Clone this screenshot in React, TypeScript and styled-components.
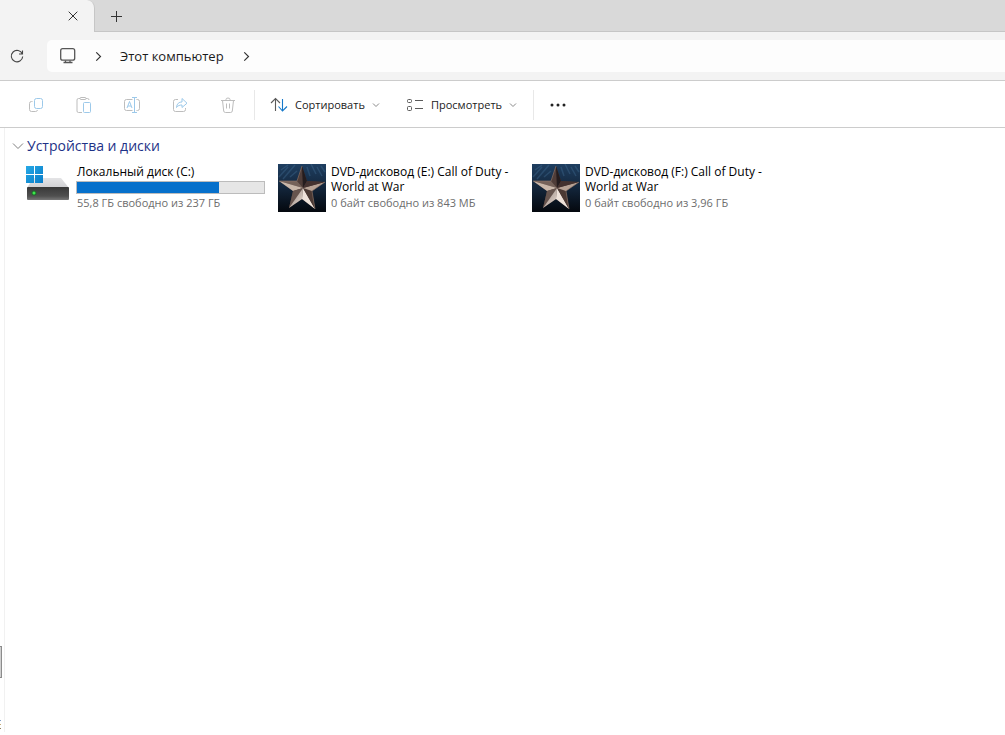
import React from "react";
import styled, { createGlobalStyle } from "styled-components";

const GlobalStyle = createGlobalStyle`
  *, *::before, *::after { box-sizing: border-box; }
  body {
    margin: 0;
    background: #ffffff;
    color: #1b1b1b;
    font-family: "Open Sans", "Noto Sans", sans-serif;
  }
  button { font: inherit; color: inherit; background: none; border: 0; padding: 0; }
  h2, h3, p, ul { margin: 0; padding: 0; }
  svg { flex: none; }
`;

const Explorer = styled.div`
  display: flex;
  flex-direction: column;
  min-height: 100vh;
`;

const TabStrip = styled.header`
  display: flex;
  height: 32px;
  background: #d9d9d9;
  box-shadow: inset 0 -1px #c6c6c6;
`;

const ActiveTab = styled.div`
  display: flex;
  align-items: center;
  justify-content: flex-end;
  width: 95px;
  padding-right: 11px;
  background: #f3f3f3;
  border-right: 1px solid #c6c6c6;
  border-top-right-radius: 8px;
`;

const StripButton = styled.button`
  display: flex;
  align-items: center;
  justify-content: center;
  width: 20px;
  height: 32px;
`;

const NewTabButton = styled(StripButton)`
  width: 42px;
`;

const AddressRow = styled.div`
  display: flex;
  align-items: center;
  height: 49px;
  background: #f3f3f3;
  border-bottom: 1px solid #cccccc;
`;

const RefreshButton = styled.button`
  display: flex;
  width: 47px;
  padding-left: 9px;
`;

const Breadcrumbs = styled.nav`
  display: flex;
  flex: 1;
  align-items: center;
  height: 32px;
  padding-left: 12px;
  background: #fdfdfd;
  border-radius: 5px 0 0 5px;
`;

const Crumb = styled.a`
  display: flex;
  color: #1b1b1b;
  font-size: 13px;
  line-height: 20px;
  text-decoration: none;
`;

const CrumbArrow = styled.span<{ $gap: number }>`
  display: flex;
  padding: 0 ${(p) => p.$gap}px;
`;

const Toolbar = styled.div`
  display: flex;
  align-items: center;
  height: 47px;
  border-bottom: 1px solid #cccccc;
  padding: 2px 0 0 12px;
`;

const ToolButton = styled.button`
  display: flex;
  align-items: center;
  justify-content: center;
  width: 48px;
  height: 40px;
`;

const Divider = styled.span<{ $before: number }>`
  width: 1px;
  height: 30px;
  margin-left: ${(p) => p.$before}px;
  background: #e8e8e8;
`;

const MenuButton = styled.button<{ $width: number }>`
  display: flex;
  align-items: center;
  gap: 7px;
  width: ${(p) => p.$width}px;
  height: 40px;
  font-size: 11px;
  line-height: 16px;
  white-space: nowrap;
`;

const MenuGroup = styled.div`
  display: flex;
  padding-left: 15px;
`;

const Body = styled.div`
  display: flex;
  flex: 1;
`;

const NavEdge = styled.aside`
  display: flex;
  flex-direction: column;
  justify-content: flex-end;
  width: 5px;
  margin-bottom: 3px;
  border-right: 1px solid #f1f1f1;
`;

const ScrollThumb = styled.div`
  width: 2px;
  height: 32px;
  margin-bottom: 42px;
  background: #d0d0d0;
  border: solid #8c8c8c;
  border-width: 1px 1px 1px 0;
`;

const StatusMark = styled.span<{ $color: string }>`
  width: 1px;
  height: 1px;
  margin-bottom: 3px;
  background: ${(p) => p.$color};
`;

const Content = styled.main`
  flex: 1;
  padding: 8px 8px 0 7px;
`;

const GroupHeader = styled.button`
  display: flex;
  align-items: center;
  gap: 3px;
  color: #1e3287;
`;

const GroupTitle = styled.h2`
  font-size: 14px;
  font-weight: 400;
  line-height: 20px;
`;

const DriveGrid = styled.ul`
  display: grid;
  grid-template-columns: repeat(auto-fill, 241px);
  column-gap: 13px;
  padding: 8px 0 0 12px;
  list-style: none;
`;

const Drive = styled.li`
  display: flex;
  align-items: flex-start;
  gap: 4px;
`;

const DriveInfo = styled.div`
  flex: 1;
  min-width: 0;
`;

const DriveName = styled.h3`
  padding-left: 1px;
  color: #000000;
  font-size: 12px;
  font-weight: 400;
  line-height: 15px;
`;

const DriveSpace = styled.p`
  padding: 1px 0 0 1px;
  color: #6d6d6d;
  font-size: 11px;
  line-height: 16px;
`;

const UsageBar = styled.div`
  height: 13px;
  margin-top: 2px;
  background: #e6e6e6;
  border: 1px solid #bcbcbc;
`;

const UsageFill = styled.div`
  height: 100%;
  background: #0670cb;
`;

const Chevron = ({ down = false, size = 8, color = "#333" }: { down?: boolean; size?: number; color?: string }) => (
  <svg width={size} height={size} viewBox="0 0 8 8" fill="none" stroke={color}>
    <path d={down ? "M1 2.5 4 5.5 7 2.5" : "M2 .3 5.8 4 2 7.7"} />
  </svg>
);

const MUTED = "#bdbdbd";
const SKY = "#9cc9ea";

const ToolIcon = ({ children }: { children: React.ReactNode }) => (
  <svg width="18" height="18" viewBox="0 0 18 18" fill="none" stroke={MUTED}>{children}</svg>
);

const CopyIcon = () => (
  <ToolIcon>
    <path d="M5.500 5.500h-1a2 2 0 0 0-2 2v6a2 2 0 0 0 2 2h4a2 2 0 0 0 2-1.500" />
    <rect x="7.500" y="2.500" width="8" height="10" rx="2" stroke={SKY} />
  </ToolIcon>
);

const PasteIcon = () => (
  <ToolIcon>
    <path d="M7 16.500H3.500a1.500 1.500 0 0 1-1.500-1.500V4a1.500 1.500 0 0 1 1.500-1.500H5M11 2.500h1.500A1.500 1.500 0 0 1 14 4" />
    <rect x="5" y="1.500" width="6" height="2" rx="1" />
    <rect x="8.500" y="6.500" width="7" height="10" rx="1" stroke={SKY} />
  </ToolIcon>
);

const RenameIcon = () => (
  <ToolIcon>
    <path d="M9.500 14.500h-6a2 2 0 0 1-2-2v-7a2 2 0 0 1 2-2h6M13.500 3.500h1a2 2 0 0 1 2 2v7a2 2 0 0 1-2 2h-1" />
    <path d="M11.500 2v14M9 1.500h5M9 16.500h5M4 12l2.500-6.500L9 12M5 10h3" stroke={SKY} />
  </ToolIcon>
);

const ShareIcon = () => (
  <ToolIcon>
    <path d="M7 3.500H4.500a2 2 0 0 0-2 2v8a2 2 0 0 0 2 2h8a2 2 0 0 0 2-2V12" />
    <path d="M5.500 11.500c.5-4 2.500-5.500 5.500-5.500V2.500l5 4.700-5 4.300V9c-2.500 0-4 .5-5.500 2.500Z" stroke={SKY} strokeLinejoin="round" />
  </ToolIcon>
);

const TrashIcon = () => (
  <ToolIcon>
    <path d="M2 4.500h14M7 4.500V3.500q0-1.500 2-1.500t2 1.500v1M3.500 4.500l1.200 10.500q.2 1.500 1.800 1.500h5q1.600 0 1.800-1.500L14.500 4.500M7.500 7.500v5M10.500 7.500v5" />
  </ToolIcon>
);

const SortIcon = () => (
  <svg width="18" height="16" viewBox="0 0 18 16" fill="none" strokeWidth="1.100">
    <path d="M5.500 14V2M1 6l4.500-4.500L10 6" stroke="#5a5a5a" />
    <path d="M12.500 2v12M8.500 9.500l4 4.500 4.500-4.500" stroke="#1679ca" />
  </svg>
);

const ViewIcon = () => (
  <svg width="18" height="16" viewBox="0 0 18 16" fill="none" stroke="#5a5a5a">
    <rect x="1.500" y="2.500" width="4" height="3" rx="1" />
    <rect x="1.500" y="9.500" width="4" height="4" rx="1" />
    <path d="M9 3.500h8M9 11.500h8" />
  </svg>
);

const ComputerIcon = () => (
  <svg width="18" height="18" viewBox="0 0 18 18" fill="none" stroke="#565656" strokeWidth="1.300">
    <rect x="1.700" y="1.700" width="14" height="11.500" rx="2" />
    <path d="M6.500 13.500v2M11 13.500v2M4.500 15.500h9" />
  </svg>
);

const RefreshIcon = () => (
  <svg width="16" height="16" viewBox="0 0 16 16" fill="none" stroke="#444" strokeWidth="1.100">
    <path d="M13.300 6A5.700 5.700 0 1 0 13.700 8.500M13.500 2.500V6H10" />
  </svg>
);

const SystemDriveIcon = () => (
  <svg width="48" height="48" viewBox="-1 0 48 48">
    <defs>
      <linearGradient id="caseTop" x1="0" y1="0" x2="0" y2="1">
        <stop stopColor="#e4e4e6" /><stop offset="1" stopColor="#cfcfd2" />
      </linearGradient>
      <linearGradient id="caseFront" x1="0" y1="0" x2="0" y2="1">
        <stop stopColor="#383838" /><stop offset=".7" stopColor="#505050" /><stop offset="1" stopColor="#777" />
      </linearGradient>
      <linearGradient id="winBlue" x1="0" y1="0" x2="1" y2="1">
        <stop stopColor="#27a9e6" /><stop offset="1" stopColor="#087cc8" />
      </linearGradient>
    </defs>
    <path d="M8 14h28l8 10H2z" fill="url(#caseTop)" />
    <rect x="2" y="23" width="42" height="13" rx="1" fill="url(#caseFront)" />
    <circle cx="9" cy="29" r="2.500" fill="#206b2b" />
    <circle cx="9" cy="29" r="1.500" fill="#3ce84c" />
    <path d="M1 2h8v8H1zM10 2h8v8h-8zM1 11h8v8H1zM10 11h8v8h-8z" fill="url(#winBlue)" />
  </svg>
);

const StarDiscIcon = ({ id }: { id: string }) => (
  <svg width="48" height="48" viewBox="0 0 48 48">
    <defs>
      <linearGradient id={`${id}-sky`} x1="0" y1="0" x2="0" y2="1">
        <stop stopColor="#1f3f61" /><stop offset=".45" stopColor="#14283f" /><stop offset="1" stopColor="#04080e" />
      </linearGradient>
      <linearGradient id={`${id}-metal`} x1="0" y1="0" x2="1" y2="1">
        <stop stopColor="#8f7f77" /><stop offset="1" stopColor="#e9ddd5" />
      </linearGradient>
    </defs>
    <rect width="48" height="48" fill={`url(#${id}-sky)`} />
    <path d="M1 13 10 3M5 15 17 1M12 13 19 7M29 3l3 9M33 0l5 10M39 3l5 9M3 6l7-5M43 2l4 6" stroke="#406b91" strokeWidth="1.500" opacity=".4" />
    <path d="M24 2 29 17 47 18 34 27 37 45 24 35 11 44 15 27 1 17 19 17Z" fill="#4a3834" />
    <path d="M24 2 19 17 25 24Z" fill="#4f3d39" />
    <path d="M24 2 29 17 25 24Z" fill="#241c1e" />
    <path d="M1 17 19 17 25 24Z" fill="#75625a" />
    <path d="M1 17 15 27 25 24Z" fill="#c9b7aa" />
    <path d="M15 27 11 44 25 24Z" fill="#66544e" />
    <path d="M11 44 24 35 25 24Z" fill={`url(#${id}-metal)`} />
    <path d="M24 35 37 45 25 24Z" fill="#eee2da" />
    <path d="M37 45 34 27 25 24Z" fill="#4b3934" />
    <path d="M34 27 47 18 25 24Z" fill="#b7a295" />
    <path d="M47 18 29 17 25 24Z" fill="#443230" />
    <path d="M24 2 19 17 1 17M47 18 34 27 37 45" fill="none" stroke="#8f776b" strokeWidth=".6" />
  </svg>
);

const tools = [
  { label: "Копировать", Icon: CopyIcon },
  { label: "Вставить", Icon: PasteIcon },
  { label: "Переименовать", Icon: RenameIcon },
  { label: "Поделиться", Icon: ShareIcon },
  { label: "Удалить", Icon: TrashIcon },
];

const drives = [
  { name: "Локальный диск (C:)", space: "55,8 ГБ свободно из 237 ГБ", used: 76 },
  { name: "DVD-дисковод (E:) Call of Duty - World at War", space: "0 байт свободно из 843 МБ" },
  { name: "DVD-дисковод (F:) Call of Duty - World at War", space: "0 байт свободно из 3,96 ГБ" },
];

export default function App() {
  return (
    <Explorer>
      <GlobalStyle />
      <TabStrip>
        <ActiveTab>
          <StripButton aria-label="Закрыть вкладку">
            <svg width="10" height="10" viewBox="0 0 10 10" stroke="#333"><path d="M.7.7l8.600 8.600M9.300.7.7 9.300" /></svg>
          </StripButton>
        </ActiveTab>
        <NewTabButton aria-label="Новая вкладка">
          <svg width="11" height="11" viewBox="0 0 11 11" stroke="#333"><path d="M5.500 0v11M0 5.500h11" /></svg>
        </NewTabButton>
      </TabStrip>

      <AddressRow>
        <RefreshButton aria-label="Обновить"><RefreshIcon /></RefreshButton>
        <Breadcrumbs aria-label="Адрес">
          <ComputerIcon />
          <CrumbArrow $gap={17}><Chevron size={9} /></CrumbArrow>
          <Crumb href="#">Этот компьютер</Crumb>
          <CrumbArrow $gap={18}><Chevron size={9} /></CrumbArrow>
        </Breadcrumbs>
      </AddressRow>

      <Toolbar>
        {tools.map(({ label, Icon }) => (
          <ToolButton key={label} aria-label={label}><Icon /></ToolButton>
        ))}
        <Divider $before={2} />
        <MenuGroup>
          <MenuButton $width={136}><SortIcon />Сортировать<Chevron down color="#8a8a8a" /></MenuButton>
          <MenuButton $width={127}><ViewIcon />Просмотреть<Chevron down color="#8a8a8a" /></MenuButton>
        </MenuGroup>
        <Divider $before={0} />
        <ToolButton aria-label="Дополнительно">
          <svg width="18" height="4" viewBox="0 0 18 4" fill="#222">
            <circle cx="3" cy="2" r="1.500" /><circle cx="9" cy="2" r="1.500" /><circle cx="15" cy="2" r="1.500" />
          </svg>
        </ToolButton>
      </Toolbar>

      <Body>
        <NavEdge>
          <ScrollThumb />
          <StatusMark $color="#7f9fca" />
          <StatusMark $color="#c5ac75" />
          <StatusMark $color="#8d8060" />
        </NavEdge>
        <Content>
          <GroupHeader aria-expanded="true">
            <svg width="12" height="12" viewBox="0 0 12 12" fill="none" stroke="#808080"><path d="M1 3.500l5 5 5-5" /></svg>
            <GroupTitle>Устройства и диски</GroupTitle>
          </GroupHeader>
          <DriveGrid>
            {drives.map((drive, i) => (
              <Drive key={drive.name}>
                {drive.used ? <SystemDriveIcon /> : <StarDiscIcon id={`disc${i}`} />}
                <DriveInfo>
                  <DriveName>{drive.name}</DriveName>
                  {drive.used && <UsageBar><UsageFill style={{ width: `${drive.used}%` }} /></UsageBar>}
                  <DriveSpace>{drive.space}</DriveSpace>
                </DriveInfo>
              </Drive>
            ))}
          </DriveGrid>
        </Content>
      </Body>
    </Explorer>
  );
}
